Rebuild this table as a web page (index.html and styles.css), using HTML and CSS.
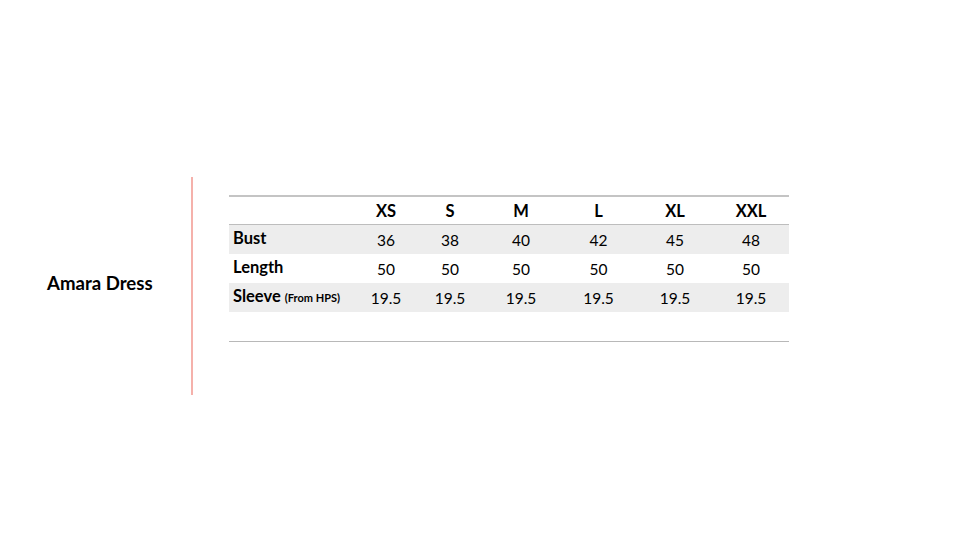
FILE: index.html
```html
<!DOCTYPE html>
<html>
<head>
<meta charset="utf-8">
<link rel="stylesheet" href="styles.css">
</head>
<body>
<div class="slide">
  <div class="title-col">
    <h1 class="title">Amara Dress</h1>
  </div>
  <table class="sizes">
    <colgroup>
      <col class="c-label"><col class="c-xs"><col class="c-s"><col class="c-m"><col class="c-l"><col class="c-xl"><col class="c-xxl">
    </colgroup>
    <thead>
      <tr><th></th><th>XS</th><th>S</th><th>M</th><th>L</th><th>XL</th><th>XXL</th></tr>
    </thead>
    <tbody>
      <tr class="shade"><td class="label">Bust</td><td>36</td><td>38</td><td>40</td><td>42</td><td>45</td><td>48</td></tr>
      <tr><td class="label">Length</td><td>50</td><td>50</td><td>50</td><td>50</td><td>50</td><td>50</td></tr>
      <tr class="shade"><td class="label">Sleeve <span class="note">(From HPS)</span></td><td>19.5</td><td>19.5</td><td>19.5</td><td>19.5</td><td>19.5</td><td>19.5</td></tr>
      <tr class="empty"><td></td><td></td><td></td><td></td><td></td><td></td><td></td></tr>
    </tbody>
  </table>
</div>
</body>
</html>
```
FILE: styles.css
```css
html, body {
  margin: 0;
  padding: 0;
  background: #ffffff;
}
body {
  width: 960px;
  height: 540px;
  overflow: hidden;
  font-family: "Lato", "Liberation Sans", sans-serif;
  color: #000000;
}
.slide {
  display: flex;
  align-items: flex-start;
  padding-top: 177px;
}
.title-col {
  width: 193px;
  height: 218px;
  padding-left: 47px;
  padding-bottom: 6px;
  box-sizing: border-box;
  display: flex;
  align-items: center;
  border-right: 2px solid #f5b1ab;
}
.title {
  margin: 0;
  font-size: 18.6px;
  font-weight: 700;
}
.sizes {
  margin-left: 36px;
  margin-top: 18px;
  width: 560px;
  border-collapse: collapse;
  table-layout: fixed;
  font-size: 15.5px;
  border-top: 2px solid #c4c4c4;
  border-bottom: 1.5px solid #b8b8b8;
}
.c-label { width: 125px; }
.c-xs { width: 64px; }
.c-s { width: 64px; }
.c-m { width: 78px; }
.c-l { width: 77px; }
.c-xl { width: 76px; }
.c-xxl { width: 76px; }
.sizes th, .sizes td {
  height: 29px;
  padding: 0;
  text-align: center;
  vertical-align: middle;
  line-height: 18px;
}
.sizes thead th {
  height: 27px;
  font-size: 16.5px;
  font-weight: 700;
  border-bottom: 1.5px solid #bdbdbd;
}
.sizes td.label {
  text-align: left;
  padding-left: 4px;
  font-size: 16.5px;
  font-weight: 700;
  vertical-align: top;
  padding-top: 4px;
  height: 25px;
}
.note {
  font-size: 11px;
}
.shade td {
  background: #ededed;
}
```
